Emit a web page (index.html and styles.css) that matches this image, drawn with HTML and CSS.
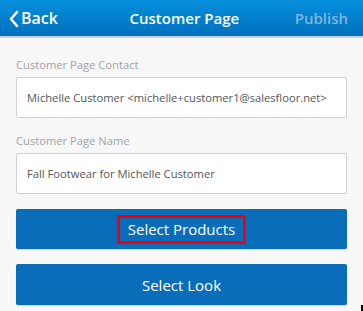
FILE: index.html
```html
<!DOCTYPE html>
<html>
<head>
<meta charset="utf-8">
<link rel="stylesheet" href="styles.css">
</head>
<body>
<header class="bar">
  <a class="back"><svg class="chev" width="11" height="18" viewBox="0 0 11 18"><path d="M9 2 L3 9 L9 16" fill="none" stroke="#fff" stroke-width="2.6" stroke-linecap="round" stroke-linejoin="round"/></svg>Back</a>
  <h1 class="title">Customer Page</h1>
  <span class="publish">Publish</span>
</header>
<main class="content">
  <label class="label">Customer Page Contact</label>
  <div class="field">Michelle Customer &lt;michelle+customer1@salesfloor.net&gt;</div>
  <label class="label">Customer Page Name</label>
  <div class="field">Fall Footwear for Michelle Customer</div>
  <button class="btn first"><span class="hl">Select Products</span></button>
  <button class="btn last">Select Look</button>
</main>
<span class="mark"></span>
</body>
</html>
```
FILE: styles.css
```css
html, body { margin: 0; padding: 0; }
body {
  width: 363px; height: 311px; overflow: hidden; position: relative;
  background: #f7f7f7;
  font-family: "Open Sans", "Noto Sans", sans-serif;
}
.bar {
  height: 36px;
  background: linear-gradient(#0690dd, #0070bd);
  border-bottom: 2px solid #c9d6e2;
  display: flex; align-items: center; justify-content: space-between;
  padding: 0 15px 0 8px;
  color: #fff;
}
.back { display: flex; align-items: center; font-size: 16px; font-weight: 600; color: #fff; gap: 2px; }
.chev { margin-top: 1px; }
.title { margin: 0; font-size: 15px; font-weight: 600; padding-left: 16px; }
.publish { font-size: 15px; font-weight: 600; color: #7fb6e0; }
.content { padding: 16px 16px 0 16px; display: flex; flex-direction: column; }
.label { font-size: 11.2px; color: #a3a3a3; line-height: 16px; margin-top: 3px; }
.field {
  margin-top: 4px; height: 41px; box-sizing: border-box;
  border: 1px solid #cfcfcf; background: #fff; border-radius: 2px;
  font-size: 11.2px; color: #555; padding: 0 10px;
  display: flex; align-items: center; white-space: nowrap;
  margin-bottom: 15px;
}
.field + .label { margin-top: 0; }
.btn {
  height: 40px; border: none; border-radius: 2px;
  background: #0a6dba; color: #fff;
  font-family: inherit; font-size: 15px; padding: 0;
  display: flex; align-items: center; justify-content: center;
  box-shadow: 0 1px 1px rgba(0,0,0,0.15);
}
.btn.first { margin-bottom: 15px; }
.btn.last { height: 41px; }
.hl { outline: 3px solid #f0000e; padding: 2px 8px 2px 8px; line-height: 19px; }
.mark { position: absolute; right: 0; bottom: 0; width: 2px; height: 6px; background: #000; }
```
